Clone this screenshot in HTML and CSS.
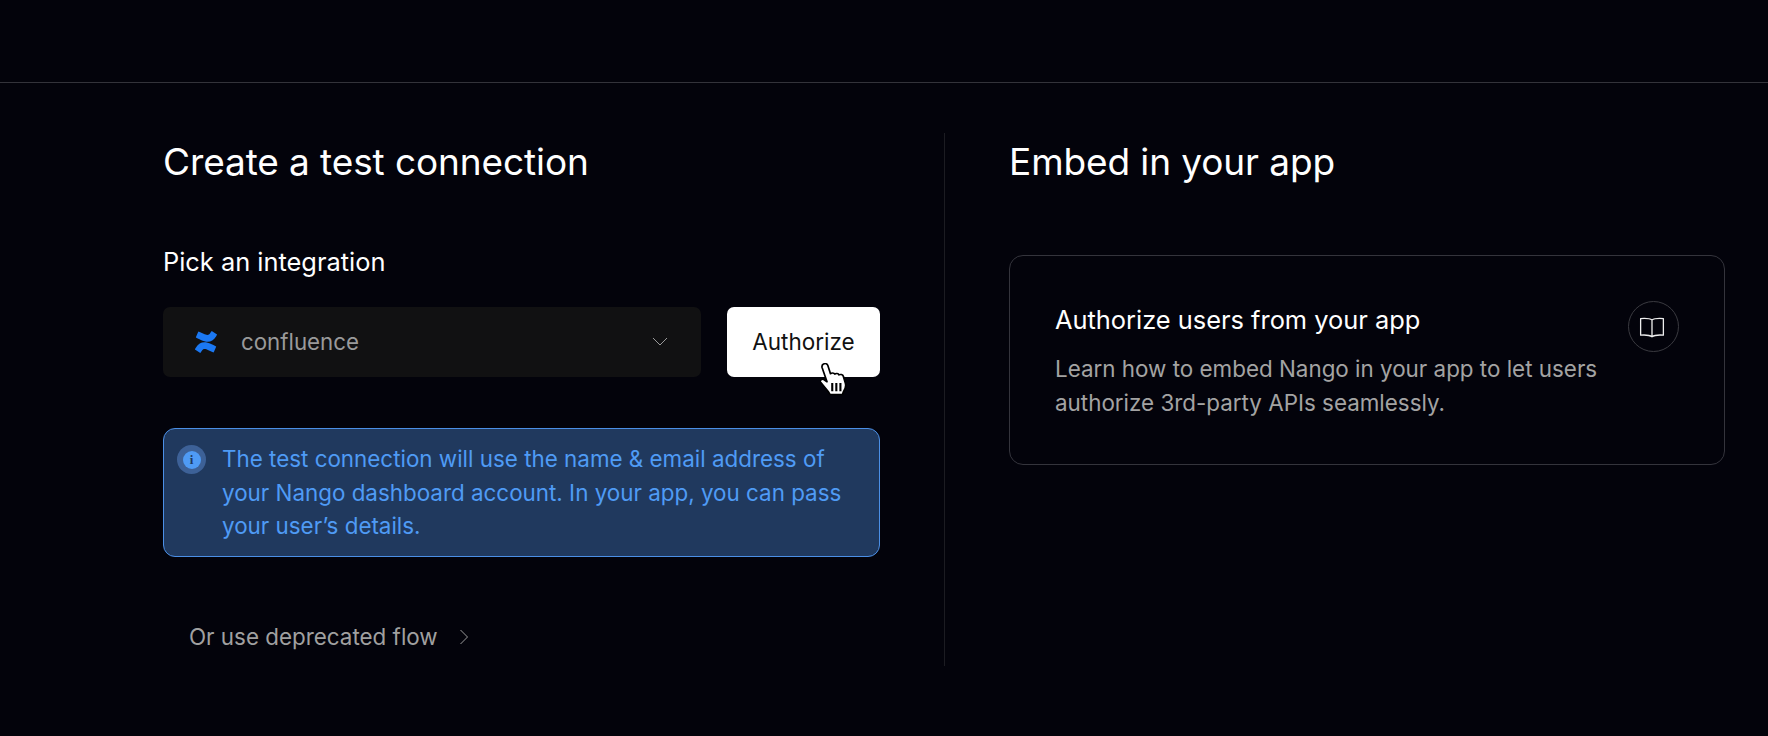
FILE: index.html
```html
<!DOCTYPE html>
<html lang="en">
<head>
    <meta charset="UTF-8">
    <meta name="viewport" content="width=device-width, initial-scale=1.0">
    <title>Getting started - Nango</title>
    <link rel="stylesheet" href="styles.css">
</head>
<body>
    <header class="topbar"></header>
    <main class="columns">
        <section class="test-col">
            <h1>Create a test connection</h1>
            <h2 class="pick-label">Pick an integration</h2>
            <div class="pick-row">
                <div class="select">
                    <svg class="confluence" viewBox="0 0 24 24" width="22" height="22">
                        <path fill="#1b78f2" d="M.87 18.257c-.248.382-.53.875-.763 1.245a.764.764 0 0 0 .255 1.04l4.965 3.054a.764.764 0 0 0 1.058-.26c.199-.332.454-.763.733-1.221 1.967-3.247 3.945-2.853 7.508-1.146l4.957 2.337a.764.764 0 0 0 1.028-.382l2.364-5.346a.764.764 0 0 0-.382-1 599.851 599.851 0 0 1-4.965-2.361C10.911 10.97 5.178 11.185.87 18.257zM23.131 5.743c.249-.405.531-.875.764-1.25a.764.764 0 0 0-.256-1.04L18.675.404a.764.764 0 0 0-1.058.26c-.2.333-.455.764-.734 1.222-1.966 3.246-3.945 2.852-7.508 1.146L4.437.694a.764.764 0 0 0-1.027.382L1.046 6.422a.764.764 0 0 0 .382 1c1.039.49 3.105 1.467 4.965 2.361 6.696 3.247 12.429 3.033 16.738-4.04z"/>
                    </svg>
                    <span class="select-value">confluence</span>
                    <svg class="chevron" viewBox="0 0 16 10" width="16" height="10">
                        <path d="M1 1l7 7 7-7" fill="none" stroke="#9a9a9a" stroke-width="1"/>
                    </svg>
                </div>
                <div class="button-wrap">
                    <button class="authorize">Authorize</button>
                    <svg class="cursor" viewBox="2 1.500 24 32" width="28" height="33" preserveAspectRatio="none">
                        <path fill="#fff" stroke="#000" stroke-width="1.500" stroke-linejoin="round" d="M5 2.500c1.500-1 3.200-.3 3.700 1.300l2.300 8.200c.8-1.200 3-1.200 3.700.3.900-1 3-.8 3.600.7 1-.8 3.200-.4 3.700 1.300l1.800 7c.7 3.200-.3 6-1.800 8.200l-.7 2.500H10.500l-1.500-3L2.500 20c-1-1.500 1-3.500 2.800-2.300l2.700 2L3.800 6c-.3-1.500.2-3 1.200-3.500z"/>
                        <path stroke="#000" stroke-width="1.800" d="M12.500 21v8M16 21v8M19.500 21v8"/>
                    </svg>
                </div>
            </div>
            <div class="alert">
                <span class="alert-icon"><span class="alert-dot">i</span></span>
                <p>The test connection will use the name &amp; email address of your Nango dashboard account. In your app, you can pass your user’s details.</p>
            </div>
            <a class="deprecated" href="#">
                Or use deprecated flow
                <svg viewBox="0 0 10 16" width="10" height="16">
                    <path d="M1.500 1l7 7-7 7" fill="none" stroke="#9a9a9a" stroke-width="1"/>
                </svg>
            </a>
        </section>
        <div class="divider"></div>
        <section class="embed-col">
            <h1>Embed in your app</h1>
            <div class="card">
                <div class="card-text">
                    <h3>Authorize users from your app</h3>
                    <p>Learn how to embed Nango in your app to let users authorize 3rd-party APIs seamlessly.</p>
                </div>
                <span class="card-icon">
                    <svg class="book" viewBox="0 0 24 24" width="26" height="26">
                        <path d="M12 5.500C10 4 7 3.800 1.500 4.200v15.300c5.500-.4 8.500 0 10.500 1.500 2-1.500 5-1.900 10.500-1.500V4.200C17 3.800 14 4 12 5.500zm0 0V21" fill="none" stroke="#eee" stroke-width="1.200" stroke-linejoin="round"/>
                    </svg>
                </span>
            </div>
        </section>
    </main>
</body>
</html>
```

FILE: styles.css
```css
/* Basic reset */
* {
    margin: 0;
    padding: 0;
    box-sizing: border-box;
}

body {
    font-family: 'Inter', sans-serif;
    color: #fff;
    background-color: #03030b;
    height: 736px;
    overflow: hidden;
}

/* Top bar */
.topbar {
    height: 83px;
    border-bottom: 1px solid #33333a;
}

/* Two columns */
.columns {
    display: flex;
    padding: 50px 43px 0 163px;
}

.test-col {
    width: 717px;
}

.divider {
    width: 1px;
    height: 533px;
    margin: 0 64px;
    background-color: #1c1c22;
}

.embed-col {
    flex: 1;
}

h1 {
    margin-top: 7px;
    font-size: 37px;
    font-weight: 400;
    line-height: 44px;
    letter-spacing: -0.1px;
    color: #fff;
}

/* Pick an integration */
.pick-label {
    margin-top: 62px;
    font-size: 25.400px;
    font-weight: 400;
    line-height: 32px;
}

.pick-row {
    display: flex;
    gap: 26px;
    margin-top: 29px;
}

.select {
    display: flex;
    align-items: center;
    width: 538px;
    height: 70px;
    padding: 0 33px 0 32px;
    background-color: #111112;
    border-radius: 7px;
}

.confluence {
    flex-shrink: 0;
}

.select-value {
    flex: 1;
    margin-left: 24px;
    margin-bottom: 2px;
    font-size: 22.300px;
    color: #9a9a9a;
}

.button-wrap {
    position: relative;
}

.authorize {
    display: block;
    width: 153px;
    height: 70px;
    padding-bottom: 2px;
    font-family: inherit;
    font-size: 22.500px;
    font-weight: 400;
    color: #111;
    background-color: #fff;
    border: none;
    border-radius: 7px;
    cursor: pointer;
}

.cursor {
    position: absolute;
    left: 93px;
    top: 56px;
}

/* Info box */
.alert {
    display: flex;
    gap: 16px;
    margin-top: 51px;
    padding: 13px 16px 14px 13px;
    height: 129px;
    background-color: #20395e;
    border: 1px solid #4b8fe6;
    border-radius: 12px;
}

.alert p {
    font-size: 22.400px;
    line-height: 33.500px;
    color: #4f9bf5;
}

.alert-icon {
    display: flex;
    align-items: center;
    justify-content: center;
    flex-shrink: 0;
    width: 29px;
    height: 29px;
    margin-top: 3px;
    background-color: #3d6197;
    border-radius: 50%;
}

.alert-dot {
    width: 18px;
    height: 18px;
    font-family: 'Liberation Serif', serif;
    font-size: 13px;
    font-weight: 700;
    line-height: 18px;
    text-align: center;
    color: #20395e;
    background-color: #4f9bf5;
    border-radius: 50%;
}

/* Deprecated link */
.deprecated {
    display: flex;
    align-items: center;
    gap: 21px;
    margin: 66px 0 0 26px;
    font-size: 22.400px;
    color: #a0a0a0;
    text-decoration: none;
}

/* Right card */
.card {
    display: flex;
    justify-content: space-between;
    height: 210px;
    margin-top: 71px;
    padding: 48px 45px 0 45px;
    border: 1px solid #34343c;
    border-radius: 14px;
}

.card-text {
    width: 560px;
}

.card h3 {
    font-size: 25.400px;
    font-weight: 400;
    line-height: 32px;
}

.card p {
    margin-top: 16px;
    font-size: 22.400px;
    line-height: 33.500px;
    color: #a3a3a3;
}

.card-icon {
    display: flex;
    align-items: center;
    justify-content: center;
    flex-shrink: 0;
    width: 51px;
    height: 51px;
    margin-top: -3px;
    border: 1px solid #3a3a40;
    border-radius: 50%;
}

.book {
    margin-right: 3px;
}
```
